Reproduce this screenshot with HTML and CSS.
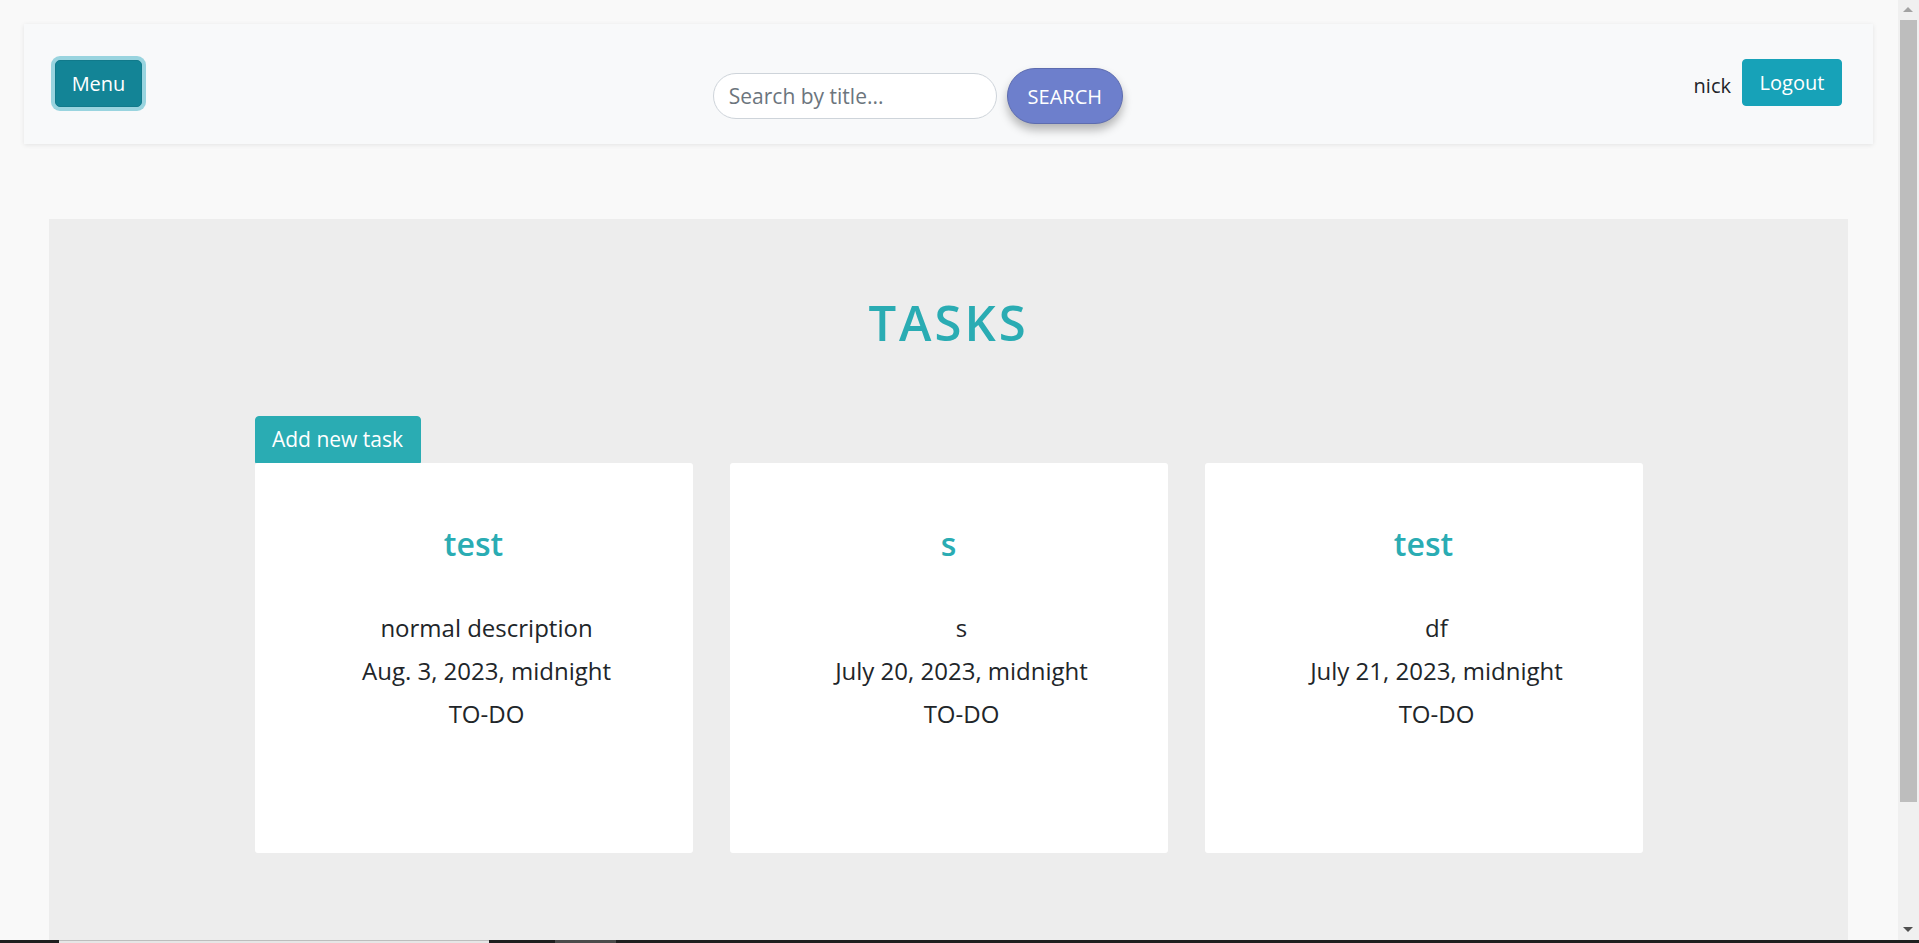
FILE: index.html
```html
<!DOCTYPE html>
<html lang="en">
<head>
<meta charset="utf-8">
<title>Tasks</title>
<link rel="stylesheet" href="styles.css">
</head>
<body>
<div class="page">
  <nav class="navbar">
    <button class="btn btn-menu" type="button">Menu</button>
    <form class="search">
      <input class="search-input" type="text" placeholder="Search by title...">
      <button class="btn btn-search" type="button">SEARCH</button>
    </form>
    <div class="user">
      <span class="user-name">nick</span>
      <button class="btn btn-logout" type="button">Logout</button>
    </div>
  </nav>

  <main class="panel">
    <h1 class="panel-title">TASKS</h1>
    <div class="tasks">
      <div class="tasks-head">
        <button class="btn btn-add" type="button">Add new task</button>
      </div>
      <div class="cards">
        <div class="card">
          <h4 class="card-title">test</h4>
          <div class="card-body">
            <p class="card-line">normal description</p>
            <p class="card-line">Aug. 3, 2023, midnight</p>
            <p class="card-line">TO-DO</p>
          </div>
        </div>
        <div class="card">
          <h4 class="card-title">s</h4>
          <div class="card-body">
            <p class="card-line">s</p>
            <p class="card-line">July 20, 2023, midnight</p>
            <p class="card-line">TO-DO</p>
          </div>
        </div>
        <div class="card">
          <h4 class="card-title">test</h4>
          <div class="card-body">
            <p class="card-line">df</p>
            <p class="card-line">July 21, 2023, midnight</p>
            <p class="card-line">TO-DO</p>
          </div>
        </div>
      </div>
    </div>
  </main>
</div>

<div class="scrollbar">
  <span class="sb-arrow sb-up"></span>
  <span class="sb-thumb"></span>
  <span class="sb-arrow sb-down"></span>
</div>
<div class="bottom-strip">
  <span class="bs-black bs-a"></span>
  <span class="bs-light"></span>
  <span class="bs-black bs-b"></span>
  <span class="bs-gray"></span>
  <span class="bs-black bs-c"></span>
</div>
</body>
</html>
```

FILE: styles.css
```css
* { box-sizing: border-box; }

html, body {
  margin: 0;
  padding: 0;
  height: 100%;
  overflow: hidden;
}

body {
  background: #f9f9f9;
  font-family: "Open Sans", "Noto Sans", sans-serif;
  color: #212529;
}

.page {
  margin-right: 21px;
  padding-top: 24px;
}

/* ---------- navbar ---------- */
.navbar {
  height: 120px;
  margin: 0 25px 0 24px;
  padding: 36px 31px 0 31px;
  background: #f8f9fa;
  box-shadow: 0 1px 5px rgba(0, 0, 0, 0.09);
  display: flex;
  justify-content: space-between;
  align-items: flex-start;
}

.btn {
  font-family: inherit;
  font-size: 20px;
  line-height: 27px;
  border: 1px solid transparent;
  border-radius: 4px;
  color: #fff;
  cursor: pointer;
  padding: 0 15px;
  height: 47px;
}

.btn-menu {
  width: 87px;
  background: #138496;
  border-color: #117a8b;
  box-shadow: 0 0 0 4px rgba(58, 176, 195, 0.5);
  border-radius: 5px;
}

.search {
  display: flex;
  align-items: center;
  gap: 10px;
  margin: 8px 0 0 0;
}

.search-input {
  width: 284px;
  height: 46px;
  border: 1px solid #ced4da;
  border-radius: 23px;
  background: #fff;
  padding: 0 15px;
  font-family: inherit;
  font-size: 21px;
  color: #495057;
  outline: none;
}

.search-input::placeholder {
  color: #6c757d;
  opacity: 1;
}

.btn-search {
  width: 116px;
  height: 56px;
  padding: 0;
  background: #6d7fcc;
  border-color: #5d6caf;
  border-radius: 28px;
  box-shadow: 0 6px 10px rgba(0, 0, 0, 0.28);
}

.user {
  display: flex;
  align-items: center;
  gap: 11px;
  margin-top: -1px;
}

.user-name {
  font-size: 20px;
  line-height: 27px;
  color: #212529;
  padding-top: 5px;
}

.btn-logout {
  width: 100px;
  padding: 0;
  background: #17a2b8;
  border-color: #17a2b8;
}

/* ---------- main panel ---------- */
.panel {
  margin: 75px 50px 0 49px;
  height: 760px;
  background: #ededed;
  padding-top: 75px;
}

.panel-title {
  margin: 0;
  text-align: center;
  font-size: 49px;
  line-height: 57px;
  font-weight: 600;
  letter-spacing: 3px;
  color: #2aacb3;
}

.tasks {
  width: 1388px;
  margin: 65px auto 0;
}

.tasks-head {
  display: flex;
}

.btn-add {
  width: 166px;
  padding: 0;
  font-size: 21px;
  background: #2aacb3;
  border-color: #2aacb3;
  border-radius: 4px 4px 0 0;
}

.cards {
  display: flex;
  gap: 37px;
}

.card {
  width: 438px;
  height: 390px;
  background: #fff;
  border-radius: 3px;
  padding-top: 62px;
  text-align: center;
}

.card-title {
  margin: 0 0 43px;
  font-size: 32px;
  line-height: 38px;
  font-weight: 600;
  color: #2aacb3;
}

.card-body {
  padding-left: 26px;
}

.card-line {
  margin: 0;
  font-size: 24px;
  line-height: 43px;
  color: #212529;
}

/* ---------- fake window chrome ---------- */
.scrollbar {
  position: fixed;
  top: 0;
  right: 0;
  bottom: 3px;
  width: 21px;
  background: #f0f0f0;
}

.sb-thumb {
  position: absolute;
  left: 2px;
  right: 2px;
  top: 20px;
  height: 782px;
  background: #bdbdbd;
}

.sb-arrow {
  position: absolute;
  left: 5px;
  width: 0;
  height: 0;
  border-left: 5px solid transparent;
  border-right: 5px solid transparent;
}

.sb-up {
  top: 7px;
  border-bottom: 5px solid #a3a3a3;
}

.sb-down {
  bottom: 8px;
  border-top: 5px solid #505050;
}

.bottom-strip {
  position: fixed;
  left: 0;
  right: 0;
  bottom: 0;
  height: 3px;
  display: flex;
  background: #1e1e1e;
}

.bs-black { background: #1e1e1e; }
.bs-a { width: 59px; }
.bs-light { width: 430px; background: #e6e6e6; border-top: 1px solid #bdbdbd; }
.bs-b { width: 66px; }
.bs-gray { width: 61px; background: #4b4b4b; }
.bs-c { flex: 1; }
```
